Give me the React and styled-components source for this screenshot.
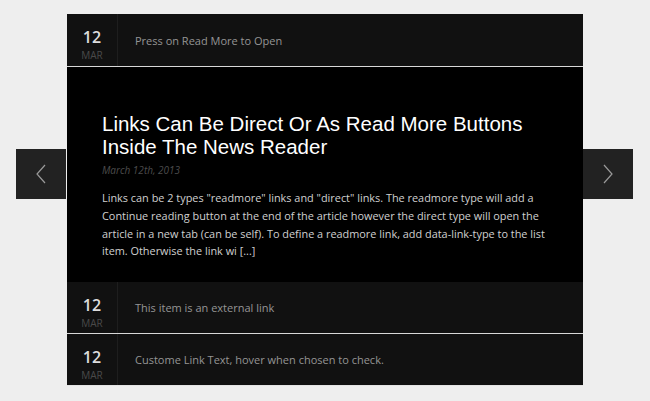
import styled, { createGlobalStyle } from "styled-components";

const Global = createGlobalStyle`
  html, body {
    margin: 0;
    padding: 0;
    background: #eeeeee;
  }
`;

const Stage = styled.div`
  position: relative;
  width: 516px;
  margin: 14px auto 0;
  border-bottom: 1px solid #e4e4e4;
`;

const Row = styled.div`
  display: flex;
  height: ${(p) => p.$h || 52}px;
  background: #111111;
  border-bottom: ${(p) => (p.$line ? "1px solid #d8d8d8" : "none")};
`;

const DateBox = styled.div`
  width: 51px;
  border-right: 1px solid #1e1e1e;
  display: flex;
  flex-direction: column;
  align-items: center;
  padding-top: 14px;
  box-sizing: border-box;
  font-family: "Open Sans", sans-serif;
`;

const Day = styled.div`
  font-size: 16px;
  font-weight: 600;
  line-height: 18px;
  color: #dddddd;
`;

const Month = styled.div`
  font-size: 10px;
  line-height: 14px;
  color: #4a4a4a;
  margin-top: 2px;
`;

const RowTitle = styled.div`
  padding-left: 17px;
  display: flex;
  align-items: center;
  font-family: "Open Sans", sans-serif;
  font-size: 11px;
  color: #959595;
`;

const Article = styled.div`
  background: #000000;
  height: 215px;
  padding: 45px 30px 0 35px;
  box-sizing: border-box;
`;

const Headline = styled.h2`
  margin: 0;
  font-family: "Liberation Sans", Arial, sans-serif;
  font-weight: normal;
  font-size: 20.5px;
  line-height: 23px;
  color: #ffffff;
`;

const Posted = styled.div`
  margin-top: 5px;
  font-family: "Open Sans", sans-serif;
  font-style: italic;
  font-size: 10px;
  color: #4c4c4c;
`;

const Body = styled.p`
  margin: 12px 0 0;
  font-family: "Open Sans", sans-serif;
  font-size: 10.9px;
  line-height: 17.8px;
  color: #d0d0d0;
`;

const NavButton = styled.button`
  position: absolute;
  top: 135px;
  ${(p) => (p.$side === "left" ? "left: -51px;" : "right: -50px;")}
  width: 50px;
  height: 50px;
  padding: 0;
  border: none;
  background: #222222;
  display: flex;
  align-items: center;
  justify-content: center;
  cursor: pointer;
`;

const Chevron = ({ dir }) => (
  <svg width="12" height="20" viewBox="0 0 12 20">
    <path
      d={dir === "left" ? "M10 1 L2 10 L10 19" : "M2 1 L10 10 L2 19"}
      fill="none"
      stroke="#9a9a9a"
      strokeWidth="1.2"
    />
  </svg>
);

const Item = ({ title, line, h }) => (
  <Row $line={line} $h={h}>
    <DateBox>
      <Day>12</Day>
      <Month>MAR</Month>
    </DateBox>
    <RowTitle>{title}</RowTitle>
  </Row>
);

export default function App() {
  return (
    <>
      <Global />
      <Stage>
        <Item title="Press on Read More to Open" line h={52} />
        <Article>
          <Headline>
            Links Can Be Direct Or As Read More Buttons Inside The News Reader
          </Headline>
          <Posted>March 12th, 2013</Posted>
          <Body>
            Links can be 2 types "readmore" links and "direct" links. The
            readmore type will add a Continue reading button at the end of the
            article however the direct type will open the article in a new tab
            (can be self). To define a readmore link, add data-link-type to the
            list item. Otherwise the link wi [...]
          </Body>
        </Article>
        <Item title="This item is an external link" line h={51} />
        <Item title="Custome Link Text, hover when chosen to check." h={51} />
        <NavButton $side="left">
          <Chevron dir="left" />
        </NavButton>
        <NavButton $side="right">
          <Chevron dir="right" />
        </NavButton>
      </Stage>
    </>
  );
}
